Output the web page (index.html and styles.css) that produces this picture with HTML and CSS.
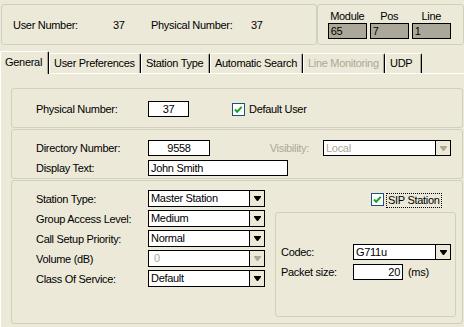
FILE: index.html
```html
<!DOCTYPE html>
<html lang="en">

<head>
    <meta charset="UTF-8">
    <title>User</title>
    <link rel="stylesheet" href="styles.css">
</head>

<body>
    <!-- header: numbers + location -->
    <div class="head">
        <div class="grp info">
            <span class="cap">User Number:</span><span class="num">37</span>
            <span class="cap">Physical Number:</span><span class="num">37</span>
        </div>
        <div class="grp loc">
            <span>Module</span><span>Pos</span><span>Line</span>
            <div class="ro">65</div>
            <div class="ro">7</div>
            <div class="ro">1</div>
        </div>
    </div>

    <!-- tabs -->
    <ul class="tabs">
        <li class="tab active t1">General</li>
        <li class="tab t2">User Preferences</li>
        <li class="tab t3">Station Type</li>
        <li class="tab t4">Automatic Search</li>
        <li class="tab off t5">Line Monitoring</li>
        <li class="tab t6">UDP</li>
    </ul>

    <div class="page">
        <div class="box g1">
            <span class="lbl">Physical Number:</span>
            <div class="edit center w41">37</div>
            <label class="chk">
                <svg width="13" height="13" viewBox="0 0 13 13"><rect x="0.5" y="0.5" width="12" height="12" fill="#fff" stroke="#1c5180"/><path d="M3 6.5l2.2 2.2 4.5-4.8" fill="none" stroke="#21a121" stroke-width="2"/></svg>
                <span>Default User</span>
            </label>
        </div>

        <div class="box g2">
            <div class="row">
                <span class="lbl">Directory Number:</span>
                <div class="edit center w62">9558</div>
                <span class="vis">Visibility:</span>
                <div class="combo dis w128">
                    <span class="txt">Local</span>
                    <span class="btn"><svg width="7" height="5" viewBox="0 0 7 5"><path d="M0 0h7v1l-3 4h-1l-3-4z" fill="#aca899"/></svg></span>
                </div>
            </div>
            <div class="row">
                <span class="lbl">Display Text:</span>
                <div class="edit w140">John Smith</div>
            </div>
        </div>

        <div class="box g3">
            <div class="fields">
                <span class="lbl">Station Type:</span>
                <div class="combo">
                    <span class="txt">Master Station</span>
                    <span class="btn"><svg width="7" height="5" viewBox="0 0 7 5"><path d="M0 0h7v1l-3 4h-1l-3-4z"/></svg></span>
                </div>
                <span class="lbl">Group Access Level:</span>
                <div class="combo">
                    <span class="txt">Medium</span>
                    <span class="btn"><svg width="7" height="5" viewBox="0 0 7 5"><path d="M0 0h7v1l-3 4h-1l-3-4z"/></svg></span>
                </div>
                <span class="lbl">Call Setup Priority:</span>
                <div class="combo">
                    <span class="txt">Normal</span>
                    <span class="btn"><svg width="7" height="5" viewBox="0 0 7 5"><path d="M0 0h7v1l-3 4h-1l-3-4z"/></svg></span>
                </div>
                <span class="lbl">Volume (dB)</span>
                <div class="combo dis">
                    <span class="txt ind">0</span>
                    <span class="btn"><svg width="7" height="5" viewBox="0 0 7 5"><path d="M0 0h7v1l-3 4h-1l-3-4z" fill="#aca899"/></svg></span>
                </div>
                <span class="lbl">Class Of Service:</span>
                <div class="combo">
                    <span class="txt">Default</span>
                    <span class="btn"><svg width="7" height="5" viewBox="0 0 7 5"><path d="M0 0h7v1l-3 4h-1l-3-4z"/></svg></span>
                </div>
            </div>

            <div class="sip">
                <label class="chk sipchk">
                    <svg width="13" height="13" viewBox="0 0 13 13"><rect x="0.5" y="0.5" width="12" height="12" fill="#fff" stroke="#1c5180"/><path d="M3 6.5l2.2 2.2 4.5-4.8" fill="none" stroke="#21a121" stroke-width="2"/></svg>
                    <span class="focus">SIP Station</span>
                </label>
                <div class="box inner">
                    <div class="row">
                        <span class="lbl2">Codec:</span>
                        <div class="combo w98">
                            <span class="txt">G711u</span>
                            <span class="btn"><svg width="7" height="5" viewBox="0 0 7 5"><path d="M0 0h7v1l-3 4h-1l-3-4z"/></svg></span>
                        </div>
                    </div>
                    <div class="row">
                        <span class="lbl2">Packet size:</span>
                        <div class="edit right w50">20</div>
                        <span class="unit">(ms)</span>
                    </div>
                </div>
            </div>
        </div>
    </div>
</body>

</html>
```

FILE: styles.css
```css
* {
    margin: 0;
    padding: 0;
    list-style: none;
    box-sizing: border-box;
}

body {
    width: 464px;
    height: 327px;
    overflow: hidden;
    background-color: #ece9d8;
    font-family: "Liberation Sans", Arial, sans-serif;
    font-size: 11px;
    letter-spacing: -0.3px;
    color: #000;
}

.grp,
.box {
    border: 1px solid #d0d0bf;
    border-radius: 3px;
}

/* header */
.head {
    display: flex;
    padding: 4px 0 0 1px;
    height: 45px;
}

.info {
    width: 322px;
    height: 41px;
    display: flex;
    align-items: center;
    padding-left: 11px;
}

.info .cap {
    width: 100px;
}

.info .num {
    width: 38px;
}

.loc {
    width: 150px;
    height: 41px;
    display: grid;
    grid-template-columns: 39px 39px 39px;
    grid-template-rows: 12px 16px;
    column-gap: 3px;
    row-gap: 1px;
    padding: 5px 0 0 10px;
}

.loc span {
    text-align: center;
    line-height: 12px;
}

.ro {
    background-color: #aca899;
    border: 1px solid #000;
    line-height: 14px;
    padding-left: 2px;
}

/* tabs */
.tabs {
    display: flex;
    align-items: flex-end;
    height: 28px;
}

.tab {
    height: 20px;
    line-height: 19px;
    padding-left: 4px;
    white-space: nowrap;
    border-top: 1px solid #fff;
    border-left: 1px solid #fff;
    border-right: 1px solid #000;
    border-radius: 2px 2px 0 0;
    box-shadow: inset -1px 0 #aca899;
}

.tab.active {
    position: relative;
    z-index: 1;
    height: 23px;
    line-height: 20px;
    margin-bottom: -1px;
    background-color: #ece9d8;
}

.tab.off {
    color: #aca899;
}

.t1 { width: 49px; }
.t2 { width: 92px; }
.t3 { width: 69px; }
.t4 { width: 93px; }
.t5 { width: 82px; }
.t6 { width: 37px; }

/* page */
.page {
    height: 254px;
    border-top: 1px solid #fff;
    border-left: 1px solid #fff;
    padding: 14px 1px 0 10px;
}

.lbl {
    flex-shrink: 0;
    width: 136px;
    padding-left: 24px;
    white-space: nowrap;
}

.g1 {
    height: 40px;
    display: flex;
    align-items: flex-start;
    padding-top: 12px;
}

.g1 .lbl {
    line-height: 16px;
}

.edit {
    flex-shrink: 0;
    height: 16px;
    border: 1px solid #000;
    background-color: #fff;
    line-height: 14px;
    padding: 0 2px;
    white-space: nowrap;
}

.center {
    text-align: center;
}

.right {
    text-align: right;
}

.w41 { width: 41px; }
.w62 { width: 62px; }
.w140 { width: 140px; }
.w128 { width: 128px; }
.w98 { width: 98px; }
.w50 { width: 50px; }

.chk {
    display: flex;
    align-items: center;
    gap: 4px;
    height: 16px;
}

.g1 .chk {
    margin-left: 43px;
}

.g2 {
    height: 50px;
    margin-top: 1px;
    padding-top: 10px;
    display: flex;
    flex-direction: column;
    gap: 4px;
}

.row {
    display: flex;
    align-items: center;
    height: 16px;
}

.vis {
    width: 113px;
    text-align: right;
    padding-right: 14px;
    color: #aca899;
}

.combo {
    display: flex;
    height: 17px;
    border: 1px solid #000;
    background-color: #fff;
}

.row .combo {
    height: 16px;
}

.combo .txt {
    flex: 1;
    line-height: 15px;
    padding-left: 2px;
    white-space: nowrap;
}

.combo .ind {
    padding-left: 5px;
}

.combo .btn {
    width: 15px;
    border-left: 1px solid #000;
    background-color: #ece9d8;
    display: flex;
    align-items: center;
    justify-content: center;
}

.combo.dis .txt {
    color: #aca899;
}

.g3 {
    height: 144px;
    margin-top: 1px;
    padding-top: 9px;
    display: flex;
    align-items: flex-start;
}

.fields {
    display: grid;
    grid-template-columns: 136px 117px;
    grid-auto-rows: 17px;
    row-gap: 3px;
    align-items: center;
}

.sip {
    width: 181px;
    margin-left: 10px;
}

.sipchk {
    height: 22px;
    margin-left: 96px;
    align-items: flex-start;
    padding-top: 3px;
    gap: 2px;
}

.focus {
    border: 1px dotted #000;
    padding: 0 1px 0 1px;
    line-height: 13px;
}

.inner {
    height: 105px;
    padding: 31px 0 0 5px;
    display: flex;
    flex-direction: column;
    gap: 4px;
}

.lbl2 {
    width: 72px;
}

.unit {
    margin-left: 5px;
}
```
